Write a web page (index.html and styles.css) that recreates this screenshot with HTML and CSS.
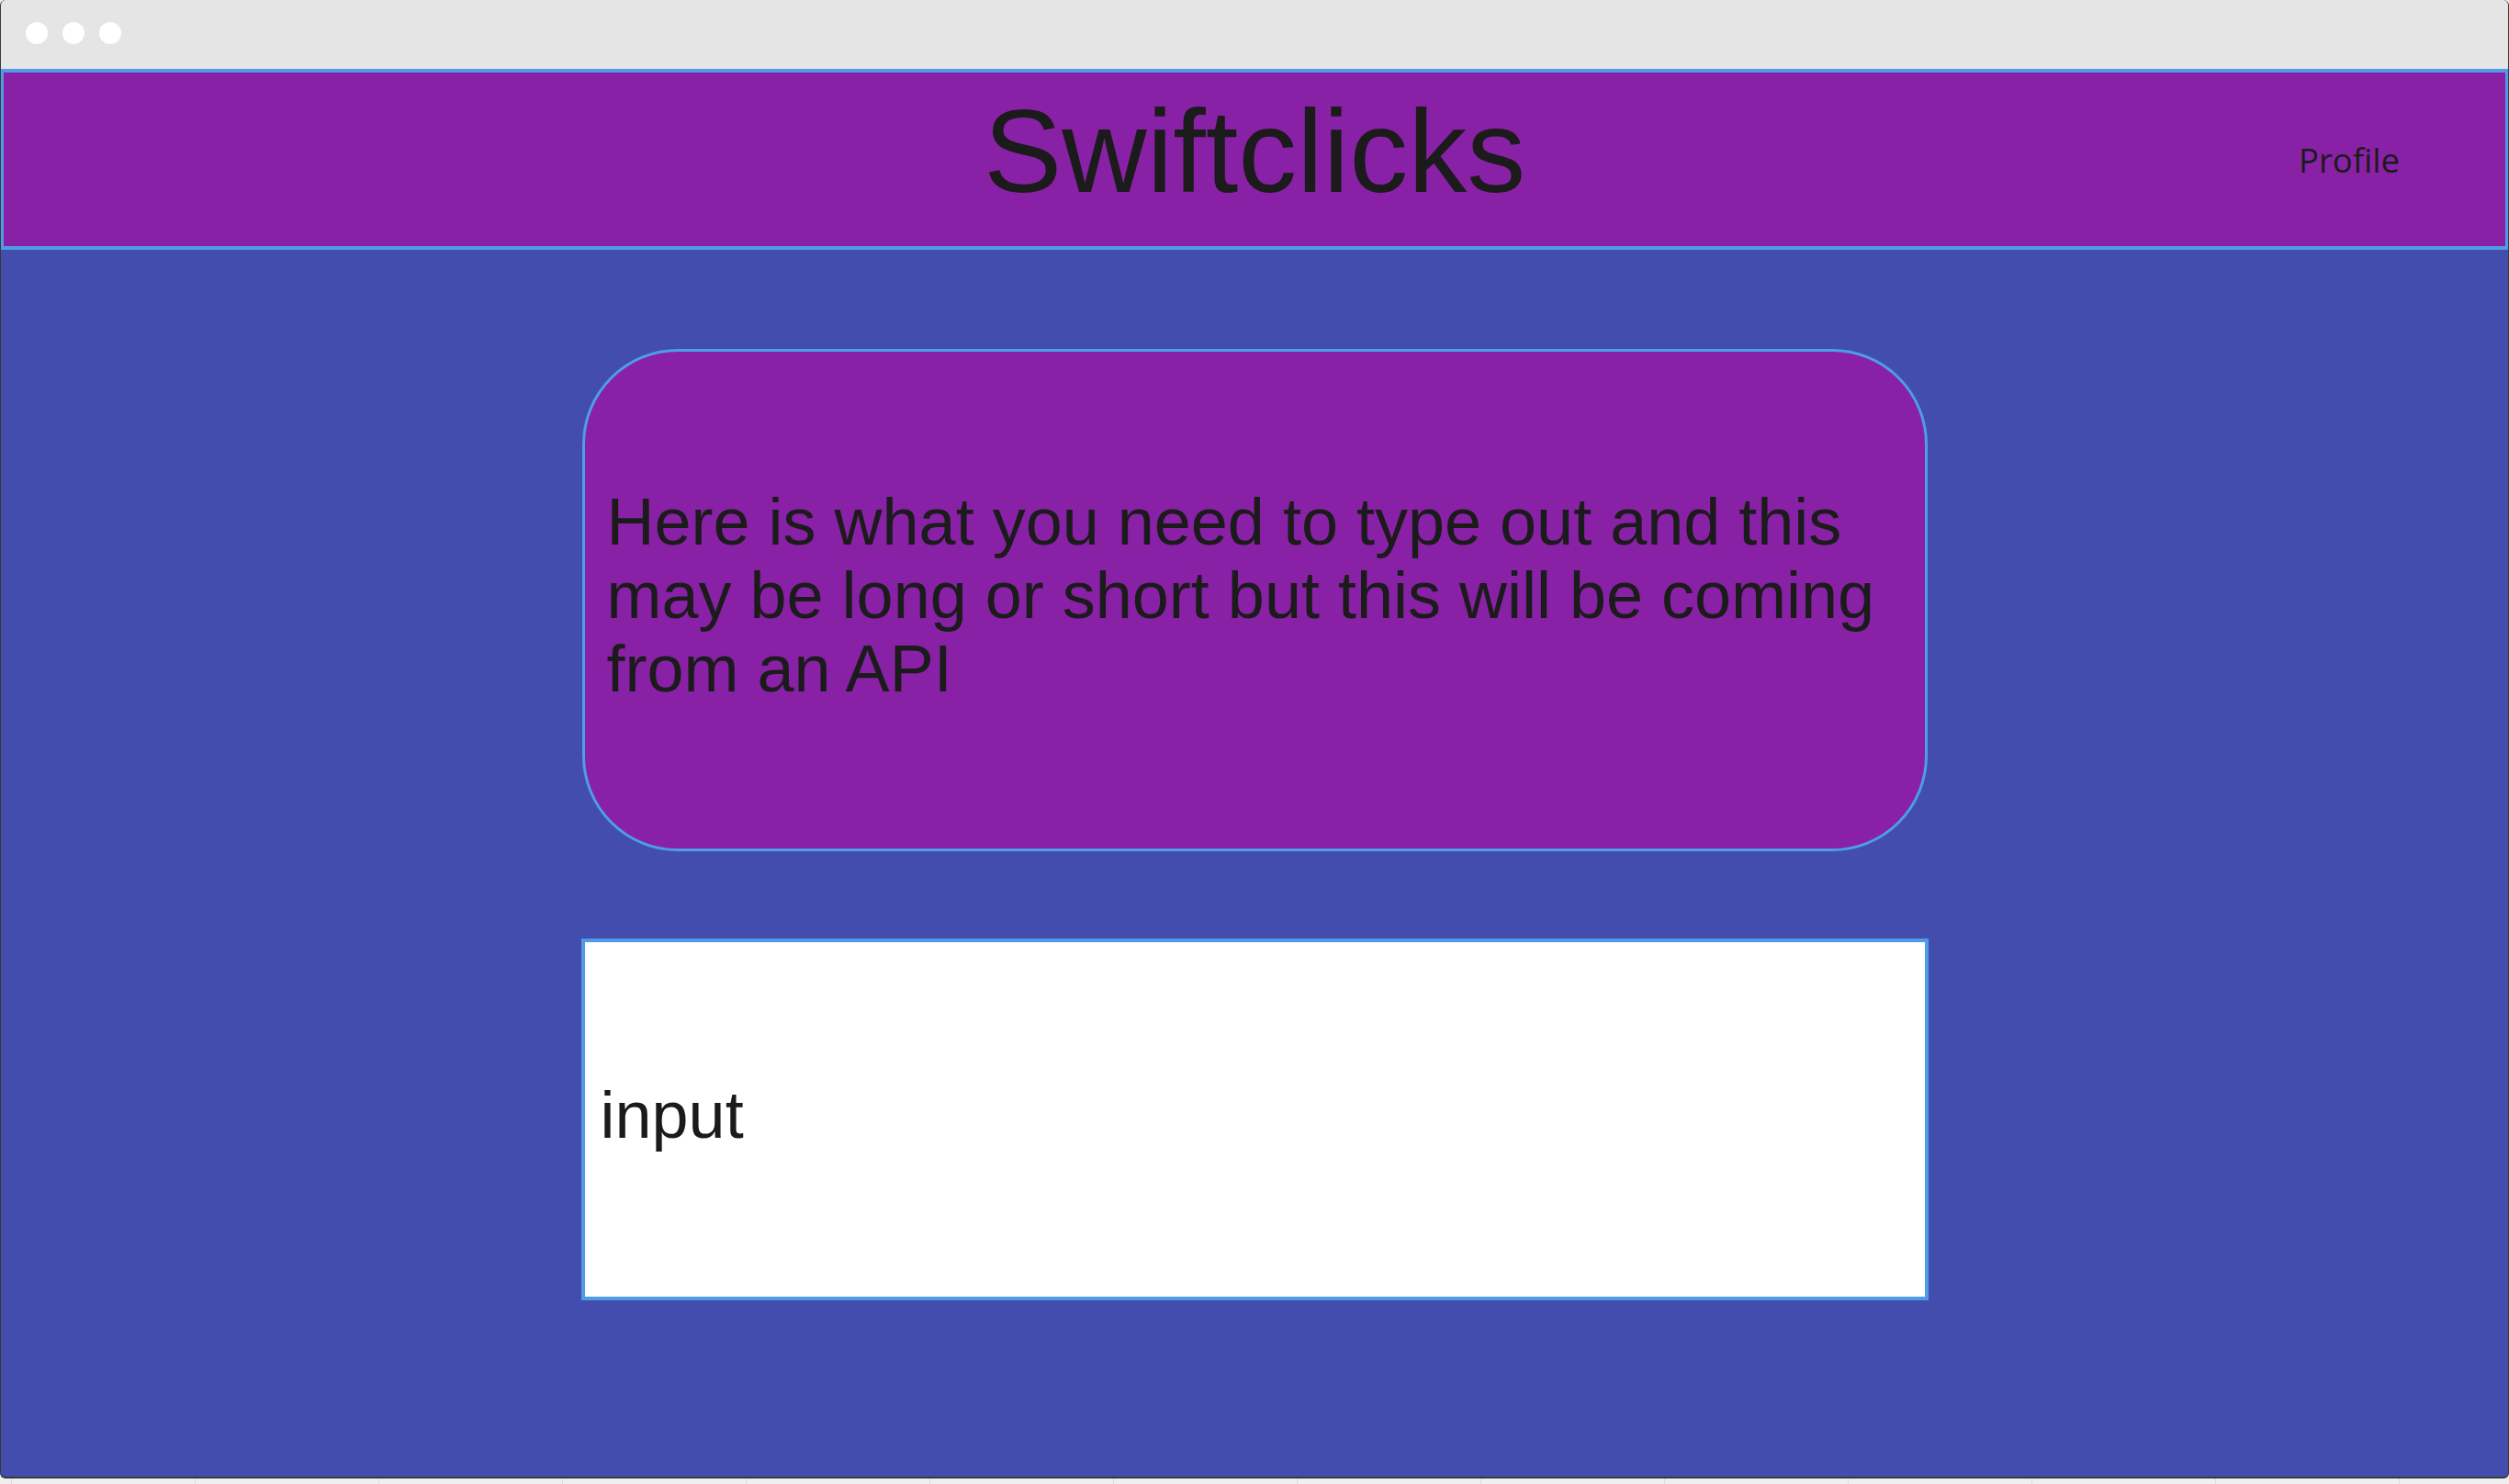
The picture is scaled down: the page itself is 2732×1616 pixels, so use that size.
FILE: index.html
```html
<!DOCTYPE html>
<html lang="en">
<head>
<meta charset="utf-8">
<title>Swiftclicks</title>
<link rel="stylesheet" href="styles.css">
</head>
<body>
  <div class="window">
    <div class="titlebar">
      <span class="dot"></span>
      <span class="dot"></span>
      <span class="dot"></span>
    </div>
    <header class="header">
      <div class="spacer"></div>
      <h1 class="title">Swiftclicks</h1>
      <nav class="nav"><a class="profile">Profile</a></nav>
    </header>
    <main class="main">
      <section class="prompt-card">
        <p class="prompt-text">Here is what you need to type out and this may be long or short but this will be coming from an API</p>
      </section>
      <div class="input-box">
        <span class="input-text">input</span>
      </div>
    </main>
  </div>
</body>
</html>
```

FILE: styles.css
```css
* {
  box-sizing: border-box;
}

html, body {
  margin: 0;
  padding: 0;
}

body {
  width: 2732px;
  height: 1616px;
  overflow: hidden;
  background-color: #efefef;
  background-image: repeating-linear-gradient(to right, transparent 0, transparent 12px, #dcdcdc 12px, #dcdcdc 13px, transparent 13px, transparent 200px);
  font-family: "Liberation Sans", Arial, sans-serif;
  color: #1b1b1b;
}

.window {
  display: flex;
  flex-direction: column;
  width: 2732px;
  height: 1610px;
  border: 1px solid #3a3a3a;
  border-top-width: 0;
  border-bottom-width: 2px;
  border-radius: 6px;
  overflow: hidden;
  background: #434dad;
}

.titlebar {
  display: flex;
  align-items: center;
  gap: 16px;
  height: 75px;
  padding: 0 0 3px 27px;
  background: #e5e5e5;
  flex-shrink: 0;
}

.dot {
  width: 24px;
  height: 24px;
  border-radius: 50%;
  background: #ffffff;
}

.header {
  display: grid;
  grid-template-columns: 1fr auto 1fr;
  align-items: center;
  height: 197px;
  flex-shrink: 0;
  background: #8921a6;
  border: 4px solid #4f9be8;
  border-left-width: 3px;
  border-right-width: 3px;
}

.title {
  align-self: start;
  margin: 12px 0 0;
  font-family: "Liberation Sans", Arial, sans-serif;
  font-weight: 400;
  font-size: 128px;
  line-height: 147px;
  color: #1b1b1b;
}

.nav {
  display: flex;
  justify-content: flex-end;
  padding-right: 115px;
}

.profile {
  font-family: "Open Sans", "Noto Sans", sans-serif;
  font-size: 36.5px;
  color: #1b1b1b;
}

.main {
  flex: 1;
  display: flex;
  flex-direction: column;
  align-items: center;
  gap: 95px;
  padding-top: 108px;
}

.prompt-card {
  display: flex;
  align-items: center;
  width: 1465px;
  height: 547px;
  padding: 0 18px 12px 24px;
  background: #8921a6;
  border: 3px solid #4d9de8;
  border-radius: 104px;
}

.prompt-text {
  margin: 0;
  font-size: 72px;
  line-height: 80px;
  color: #1b1b1b;
}

.input-box {
  display: flex;
  align-items: center;
  width: 1467px;
  height: 394px;
  padding: 0 14px 10px 17px;
  background: #ffffff;
  border: 4px solid #4f9be8;
}

.input-text {
  font-size: 72px;
  line-height: 80px;
  color: #1b1b1b;
}
```
